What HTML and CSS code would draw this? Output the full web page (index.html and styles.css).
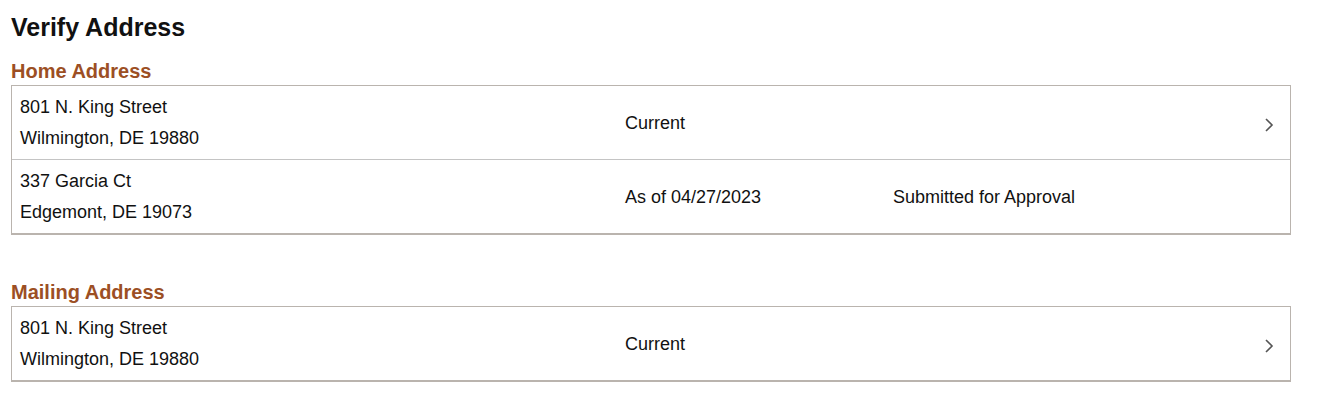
FILE: index.html
```html
<!DOCTYPE html>
<html lang="en">
<head>
    <meta charset="UTF-8">
    <title>Verify Address</title>
    <link rel="stylesheet" href="styles.css">
</head>
<body>

    <h1 class="page-title">Verify Address</h1>

    <section class="addr-group">
        <h2 class="group-title">Home Address</h2>
        <div class="addr-list">
            <div class="addr-row">
                <div class="addr-text">
                    <div>801 N. King Street</div>
                    <div>Wilmington, DE 19880</div>
                </div>
                <div class="addr-date">Current</div>
                <div class="addr-status"></div>
                <div class="addr-go">
                    <svg width="10" height="14" viewBox="0 0 10 14"><polyline points="2,1 8,7 2,13" fill="none" stroke="#555" stroke-width="1.6"/></svg>
                </div>
            </div>
            <div class="addr-row">
                <div class="addr-text">
                    <div>337 Garcia Ct</div>
                    <div>Edgemont, DE 19073</div>
                </div>
                <div class="addr-date">As of 04/27/2023</div>
                <div class="addr-status">Submitted for Approval</div>
                <div class="addr-go"></div>
            </div>
        </div>
    </section>

    <section class="addr-group mailing">
        <h2 class="group-title">Mailing Address</h2>
        <div class="addr-list">
            <div class="addr-row">
                <div class="addr-text">
                    <div>801 N. King Street</div>
                    <div>Wilmington, DE 19880</div>
                </div>
                <div class="addr-date">Current</div>
                <div class="addr-status"></div>
                <div class="addr-go">
                    <svg width="10" height="14" viewBox="0 0 10 14"><polyline points="2,1 8,7 2,13" fill="none" stroke="#555" stroke-width="1.6"/></svg>
                </div>
            </div>
        </div>
    </section>

</body>
</html>
```

FILE: styles.css
```css
body {
    font-family: "Liberation Sans", Arial, sans-serif;
    margin: 0;
    padding: 13px 11px 10px;
    color: #111;
    background: #fff;
}
.page-title {
    font-size: 25px;
    line-height: 29px;
    font-weight: bold;
    margin: 0 0 18px 0;
}
.group-title {
    font-size: 20px;
    line-height: 23px;
    font-weight: bold;
    color: #9c4f24;
    margin: 0 0 2px 0;
}
.mailing {
    margin-top: 46px;
}
.addr-list {
    width: 1278px;
    border: 1px solid #bab4ae;
    border-bottom-width: 2px;
}
.addr-row {
    display: grid;
    grid-template-columns: 605px 268px 1fr 30px;
    align-items: center;
    padding: 6px 16px 5px 8px;
    font-size: 18px;
    color: #111;
}
.addr-row + .addr-row {
    border-top: 1px solid #c4c4c4;
}
.addr-text div {
    line-height: 31px;
}
.addr-go {
    display: flex;
    justify-content: flex-end;
    padding-top: 3px;
}
```
